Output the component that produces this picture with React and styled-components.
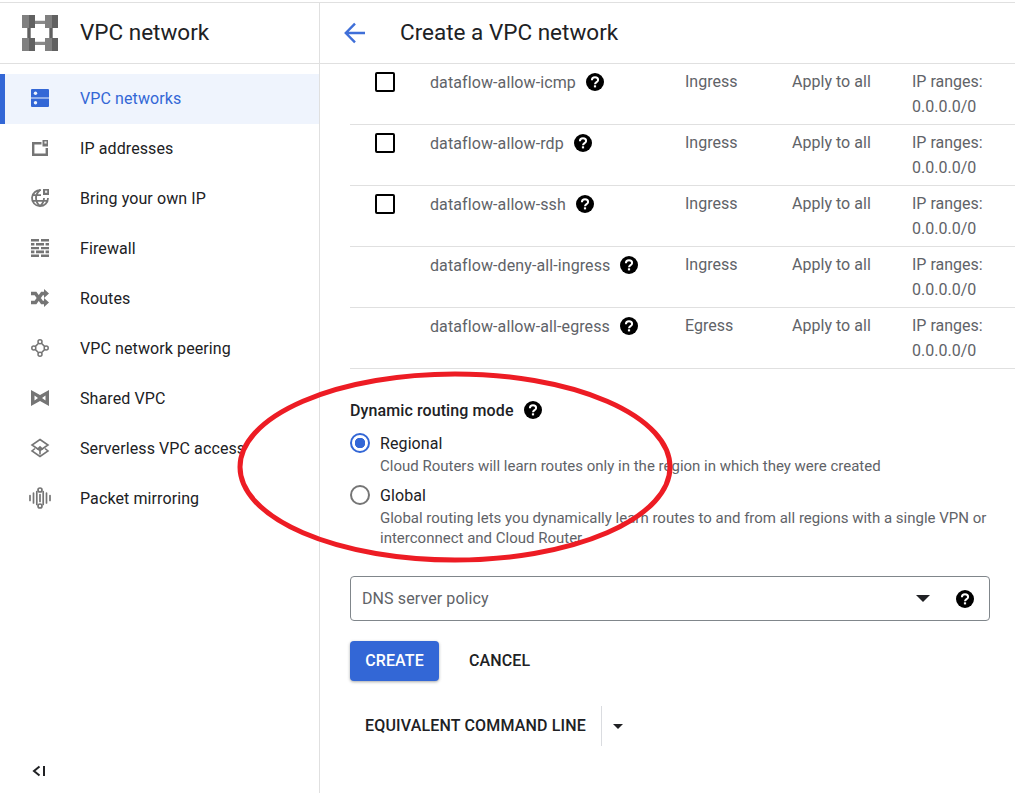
import styled, { createGlobalStyle } from "styled-components";

const GlobalStyle = createGlobalStyle`
  html, body {
    margin: 0;
    padding: 0;
    background: #fff;
  }
  body {
    font-family: Roboto, "Liberation Sans", sans-serif;
    color: #202124;
  }
`;

const navItems = [
  { label: "VPC networks", icon: "networks", active: true },
  { label: "IP addresses", icon: "ip" },
  { label: "Bring your own IP", icon: "byoip" },
  { label: "Firewall", icon: "firewall" },
  { label: "Routes", icon: "routes" },
  { label: "VPC network peering", icon: "peering" },
  { label: "Shared VPC", icon: "shared" },
  { label: "Serverless VPC access", icon: "serverless" },
  { label: "Packet mirroring", icon: "mirroring" },
];

const rules = [
  { name: "dataflow-allow-icmp", dir: "Ingress", check: true },
  { name: "dataflow-allow-rdp", dir: "Ingress", check: true },
  { name: "dataflow-allow-ssh", dir: "Ingress", check: true },
  { name: "dataflow-deny-all-ingress", dir: "Ingress" },
  { name: "dataflow-allow-all-egress", dir: "Egress" },
];

function NavIcon({ name, color = "#757575" }) {
  switch (name) {
    case "networks":
      return (
        <svg width="18" height="18" viewBox="0 0 18 18">
          <path fill={color} d="M1 0h16a1 1 0 0 1 1 1v7.5H0V1a1 1 0 0 1 1-1zM0 9.5h18V17a1 1 0 0 1-1 1H1a1 1 0 0 1-1-1z" />
          <circle cx="4.5" cy="4.3" r="1.7" fill="#eff4fd" />
          <circle cx="4.5" cy="13.7" r="1.7" fill="#eff4fd" />
        </svg>
      );
    case "ip":
      return (
        <svg width="18" height="18" viewBox="0 0 18 18">
          <path fill={color} d="M1 3h9.5v2.4H3.4V14.6h11.2V9H17v8H1z" />
          <path fill={color} d="M11.5 1H17v6.5h-5.5z" />
          <path fill="#e8e8e8" d="M13.4 2.4h2.2v2.2h-2.2z" />
        </svg>
      );
    case "byoip":
      return (
        <svg width="20" height="20" viewBox="0 0 20 20">
          <path
            fill="none"
            stroke={color}
            strokeWidth="1.8"
            d="M11 2.2A8 8 0 1 0 18 10M2 7.2h9M2 12.8h16M10 2c-2.8 2.4-4 5-4 8s1.2 5.6 4 8c2.8-2.4 4-5 4-8"
          />
          <path fill={color} d="M13 1h6v6h-6z" />
          <path fill="#e8e8e8" d="M15 2.6h2.2v2.2H15z" />
        </svg>
      );
    case "firewall":
      return (
        <svg width="18" height="18" viewBox="0 0 18 18">
          <path
            fill={color}
            d="M0 0h8v2.6H0zM10 0h8v2.6h-8zM0 4h3.4v2.6H0zM5 4h8v2.6H5zM14.6 4H18v2.6h-3.4zM0 8h8v2.2H0zM10 8h8v2.2h-8zM0 11.6h3.4v2.6H0zM5 11.6h8v2.6H5zM14.6 11.6H18v2.6h-3.4zM0 15.4h8V18H0zM10 15.4h8V18h-8z"
          />
        </svg>
      );
    case "routes":
      return (
        <svg width="18" height="18" viewBox="0 0 18 18">
          <path
            fill="none"
            stroke={color}
            strokeWidth="3.4"
            d="M0 4.5h4.5L11 13.5h3M0 13.5h4.5L11 4.5h3"
          />
          <path fill={color} d="M13 0l5 4.5L13 9zM13 9l5 4.5L13 18z" />
        </svg>
      );
    case "peering":
      return (
        <svg width="18" height="18" viewBox="0 0 18 18" fill="none" stroke={color} strokeWidth="1.5">
          <circle cx="9" cy="2.8" r="2" />
          <circle cx="9" cy="15.2" r="2" />
          <circle cx="2.8" cy="9" r="2" />
          <circle cx="15.2" cy="9" r="2" />
          <path d="M7.6 4.2L4.2 7.6M10.4 4.2l3.4 3.4M4.2 10.4l3.4 3.4M13.8 10.4l-3.4 3.4" />
        </svg>
      );
    case "shared":
      return (
        <svg width="18" height="16" viewBox="0 0 18 16">
          <path
            fill={color}
            fillRule="evenodd"
            d="M0 0l9 5 9-5v16l-9-5-9 5zM3.5 5.4v5.2L7 8zM14.5 5.4L11 8l3.5 2.6z"
          />
        </svg>
      );
    case "serverless":
      return (
        <svg width="20" height="20" viewBox="0 0 20 20" fill="none" stroke={color} strokeWidth="1.6">
          <path d="M10 1.5L18 7l-8 5.5L2 7zM5 10.5L2 13l8 5.5 8-5.5-3-2.5" />
          <path d="M10 16.5V9M7.2 11.5L10 8.8l2.8 2.7" />
        </svg>
      );
    case "mirroring":
    default:
      return (
        <svg width="22" height="22" viewBox="0 0 22 22" fill="none" stroke={color} strokeWidth="1.7" strokeLinecap="round">
          <circle cx="11" cy="3" r="2" />
          <circle cx="11" cy="19" r="2" />
          <path d="M1 8.5v5M4.5 6v10M17.5 6v10M21 8.5v5M7.8 4.5v13M14.2 4.5v13M11 7.5v7" />
        </svg>
      );
  }
}

function HelpIcon() {
  return (
    <svg width="18" height="18" viewBox="0 0 18 18">
      <circle cx="9" cy="9" r="9" fill="#000" />
      <path
        fill="none"
        stroke="#fff"
        strokeWidth="2"
        d="M5.9 7.2C5.9 5.3 7.3 4.2 9 4.2s3.1 1.1 3.1 2.7c0 2.2-3.1 2.3-3.1 4.4"
      />
      <path fill="#fff" d="M7.9 12.3h2.2v2.1H7.9z" />
    </svg>
  );
}

function Logo() {
  return (
    <svg width="36" height="36" viewBox="0 0 36 36">
      <path fill="#8a8a8a" d="M13 5.7h10V9H13zM13 26.7h10V30H13z" />
      <path fill="#5f5f5f" d="M5.3 13h3.4v10H5.3zM27.3 13h3.4v10h-3.4z" />
      <path fill="#808080" d="M0 0h7v13H0zM23 0h7v13h-7zM0 23h7v13H0zM23 23h7v13h-7z" />
      <path fill="#616161" d="M7 0h6v13H7zM30 0h6v13h-6zM7 23h6v13H7zM30 23h6v13h-6z" />
    </svg>
  );
}

export default function App() {
  return (
    <>
      <GlobalStyle />
      <Page>
        <Sidebar>
          <SideHeader>
            <LogoSlot>
              <Logo />
            </LogoSlot>
            <SideTitle>VPC network</SideTitle>
          </SideHeader>
          <NavList>
            {navItems.map((item) => (
              <NavItem key={item.label} $active={item.active}>
                <NavIconSlot>
                  <NavIcon name={item.icon} color={item.active ? "#3367d6" : "#757575"} />
                </NavIconSlot>
                <NavLabel>{item.label}</NavLabel>
              </NavItem>
            ))}
          </NavList>
          <Collapse>
            <svg width="16" height="12" viewBox="0 0 16 12">
              <path fill="none" stroke="#202124" strokeWidth="2" d="M8.5 1.5L3 6l5.5 4.5" />
              <path fill="#202124" d="M12 1h2v10h-2z" />
            </svg>
          </Collapse>
        </Sidebar>

        <Main>
          <MainHeader>
            <BackButton>
              <svg width="24" height="24" viewBox="0 0 24 24">
                <path
                  fill="none"
                  stroke="#3f6fd8"
                  strokeWidth="2.4"
                  d="M21 12H2.5M11 2.7L1.8 12l9.2 9.3"
                />
              </svg>
            </BackButton>
            <MainTitle>Create a VPC network</MainTitle>
          </MainHeader>

          <Content>
            <RuleTable>
              {rules.map((rule) => (
                <RuleRow key={rule.name}>
                  <CheckCell>{rule.check && <CheckBox />}</CheckCell>
                  <NameCell>
                    <RuleName>{rule.name}</RuleName>
                    <HelpIcon />
                  </NameCell>
                  <DirCell>{rule.dir}</DirCell>
                  <ActionCell>Apply to all</ActionCell>
                  <RangeCell>
                    IP ranges:
                    <br />
                    0.0.0.0/0
                  </RangeCell>
                </RuleRow>
              ))}
            </RuleTable>

            <RoutingSection>
              <SectionLabel>
                Dynamic routing mode
                <HelpIcon />
              </SectionLabel>
              <RadioRow>
                <Radio $checked />
                <RadioText>
                  <RadioTitle>Regional</RadioTitle>
                  <RadioHint>Cloud Routers will learn routes only in the region in which they were created</RadioHint>
                </RadioText>
              </RadioRow>
              <RadioRow>
                <Radio />
                <RadioText>
                  <RadioTitle>Global</RadioTitle>
                  <RadioHint>
                    Global routing lets you dynamically learn routes to and from all regions with a single VPN or
                    interconnect and Cloud Router
                  </RadioHint>
                </RadioText>
              </RadioRow>
            </RoutingSection>

            <SelectField>
              <SelectLabel>DNS server policy</SelectLabel>
              <SelectCaret />
              <HelpIcon />
            </SelectField>

            <Actions>
              <PrimaryButton>CREATE</PrimaryButton>
              <TextButton>CANCEL</TextButton>
            </Actions>

            <CommandRow>
              <CommandButton>EQUIVALENT COMMAND LINE</CommandButton>
              <CommandDivider />
              <SmallCaret />
            </CommandRow>
          </Content>
        </Main>

        <Annotation width="438" height="194" viewBox="0 0 438 194">
          <ellipse
            cx="219"
            cy="97"
            rx="215"
            ry="93"
            fill="none"
            stroke="#ed1c24"
            strokeWidth="5"
          />
        </Annotation>
      </Page>
    </>
  );
}

const Page = styled.div`
  position: relative;
  display: flex;
  width: 1015px;
  height: 790px;
  margin-top: 2px;
  border-top: 1px solid #e0e0e0;
  overflow: hidden;
  background: #fff;
  letter-spacing: 0.1px;
`;

const Sidebar = styled.aside`
  display: flex;
  flex-direction: column;
  flex: 0 0 320px;
  box-sizing: border-box;
  border-right: 1px solid #e0e0e0;
`;

const SideHeader = styled.div`
  display: flex;
  align-items: center;
  flex: 0 0 60px;
  border-bottom: 1px solid #e0e0e0;
`;

const LogoSlot = styled.div`
  display: flex;
  flex: 0 0 80px;
  padding-left: 22px;
  box-sizing: border-box;
`;

const SideTitle = styled.h1`
  margin: 0;
  padding-bottom: 2px;
  font-size: 22.5px;
  font-weight: 400;
  letter-spacing: 0;
  color: #202124;
`;

const NavList = styled.nav`
  display: flex;
  flex-direction: column;
  padding-top: 10px;
  flex: 1;
`;

const NavItem = styled.div`
  display: flex;
  align-items: center;
  height: 50px;
  box-sizing: border-box;
  padding-bottom: 2px;
  border-left: 5px solid ${(p) => (p.$active ? "#3367d6" : "transparent")};
  background: ${(p) => (p.$active ? "#eff4fd" : "transparent")};
  color: ${(p) => (p.$active ? "#3367d6" : "#202124")};
`;

const NavIconSlot = styled.div`
  display: flex;
  justify-content: center;
  align-items: center;
  flex: 0 0 70px;
  margin-right: 5px;
`;

const NavLabel = styled.span`
  font-size: 16px;
  white-space: nowrap;
`;

const Collapse = styled.div`
  display: flex;
  align-items: center;
  height: 44px;
  padding-left: 31px;
`;

const Main = styled.main`
  display: flex;
  flex-direction: column;
  flex: 1;
  min-width: 0;
`;

const MainHeader = styled.div`
  display: flex;
  align-items: center;
  flex: 0 0 60px;
  border-bottom: 1px solid #e0e0e0;
`;

const BackButton = styled.div`
  display: flex;
  flex: 0 0 80px;
  padding-left: 24px;
  box-sizing: border-box;
`;

const MainTitle = styled.h2`
  margin: 0;
  padding-bottom: 2px;
  font-size: 22.5px;
  font-weight: 400;
  letter-spacing: 0;
  color: #202124;
`;

const Content = styled.div`
  display: flex;
  flex-direction: column;
  padding-left: 30px;
  padding-right: 25px;
`;

const RuleTable = styled.div`
  margin-right: -25px;
`;

const RuleRow = styled.div`
  display: flex;
  height: 61px;
  padding-top: 5px;
  box-sizing: border-box;
  border-bottom: 1px solid #e0e0e0;
  font-size: 16px;
  line-height: 25px;
  color: #5f6368;
`;

const CheckCell = styled.div`
  flex: 0 0 80px;
  padding-left: 25px;
  padding-top: 3px;
  box-sizing: border-box;
`;

const CheckBox = styled.div`
  width: 20px;
  height: 20px;
  box-sizing: border-box;
  border: 2px solid #000;
  border-radius: 2px;
`;

const NameCell = styled.div`
  display: flex;
  align-items: flex-start;
  flex: 0 0 255px;
  gap: 10px;
  svg {
    margin-top: 4px;
  }
`;

const RuleName = styled.span`
  padding-top: 1px;
  white-space: nowrap;
`;

const DirCell = styled.div`
  flex: 0 0 107px;
  letter-spacing: 0;
`;

const ActionCell = styled.div`
  flex: 0 0 120px;
  letter-spacing: 0.03px;
`;

const RangeCell = styled.div`
  white-space: nowrap;
  letter-spacing: 0;
`;

const RoutingSection = styled.section`
  display: flex;
  flex-direction: column;
  padding-top: 31px;
`;

const SectionLabel = styled.div`
  display: flex;
  align-items: center;
  gap: 10px;
  height: 20px;
  font-size: 16px;
  font-weight: 500;
  color: #202124;
`;

const RadioRow = styled.div`
  display: flex;
  align-items: flex-start;
  margin-top: 12px;
  & + & {
    margin-top: 8px;
  }
`;

const Radio = styled.span`
  flex: 0 0 20px;
  height: 20px;
  box-sizing: border-box;
  margin-right: 10px;
  margin-top: 1px;
  border-radius: 50%;
  border: 2px solid ${(p) => (p.$checked ? "#3367d6" : "#757575")};
  background: ${(p) =>
    p.$checked ? "radial-gradient(circle, #3367d6 0 5px, #fff 5.5px)" : "#fff"};
`;

const RadioText = styled.div`
  display: flex;
  flex-direction: column;
`;

const RadioTitle = styled.div`
  font-size: 16px;
  line-height: 24px;
  color: #202124;
`;

const RadioHint = styled.div`
  font-size: 15px;
  line-height: 20px;
  letter-spacing: 0;
  color: #5f6368;
`;

const SelectField = styled.div`
  display: flex;
  align-items: center;
  height: 45px;
  box-sizing: border-box;
  margin-top: 28px;
  padding: 0 15px 0 11px;
  border: 1px solid #80868b;
  border-radius: 4px;
`;

const SelectLabel = styled.span`
  flex: 1;
  font-size: 16px;
  color: #5f6368;
`;

const SelectCaret = styled.span`
  width: 0;
  height: 0;
  margin-right: 26px;
  border-left: 7px solid transparent;
  border-right: 7px solid transparent;
  border-top: 7px solid #202124;
`;

const Actions = styled.div`
  display: flex;
  align-items: center;
  margin-top: 20px;
  gap: 15px;
`;

const PrimaryButton = styled.button`
  width: 89px;
  height: 40px;
  padding: 0 0 2px;
  border: 0;
  border-radius: 4px;
  background: #3367d6;
  color: #fff;
  font-family: inherit;
  font-size: 16px;
  font-weight: 500;
  letter-spacing: 0.1px;
  box-shadow: 0 1px 3px rgba(60, 64, 67, 0.45);
`;

const TextButton = styled.button`
  height: 40px;
  padding: 0 15px 2px;
  border: 0;
  background: none;
  color: #202124;
  font-family: inherit;
  font-size: 16px;
  font-weight: 500;
  letter-spacing: 0.1px;
`;

const CommandRow = styled.div`
  display: flex;
  align-items: center;
  height: 40px;
  margin-top: 25px;
`;

const CommandButton = styled.div`
  padding: 0 15px 2px;
  font-size: 16px;
  font-weight: 500;
  letter-spacing: 0.17px;
  color: #202124;
  white-space: nowrap;
`;

const CommandDivider = styled.span`
  align-self: stretch;
  width: 1px;
  background: #dadce0;
`;

const SmallCaret = styled.span`
  width: 0;
  height: 0;
  margin-left: 11px;
  border-left: 5px solid transparent;
  border-right: 5px solid transparent;
  border-top: 5px solid #202124;
`;

const Annotation = styled.svg`
  position: absolute;
  left: 236px;
  top: 367px;
  pointer-events: none;
`;
